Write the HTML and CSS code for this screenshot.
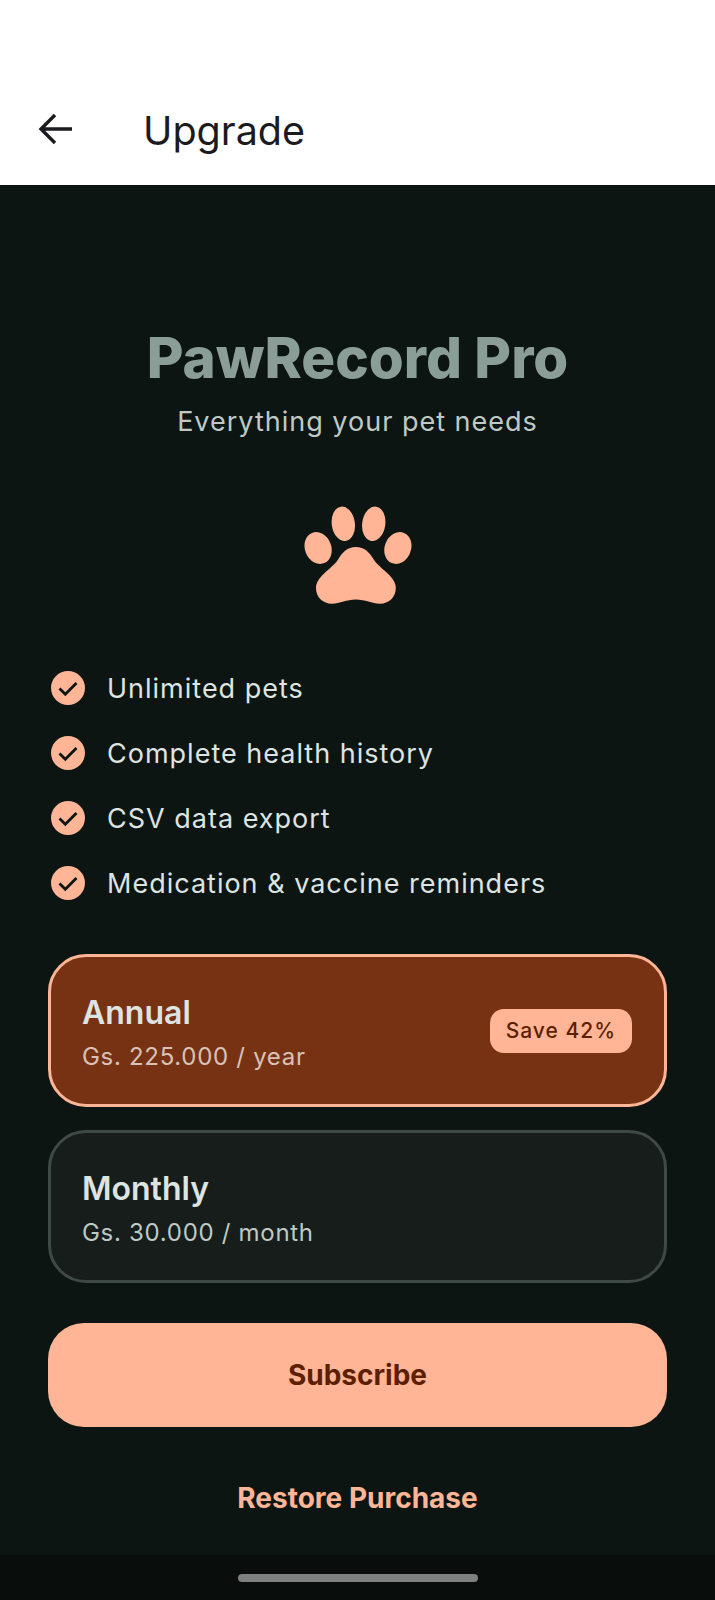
FILE: index.html
```html
<!DOCTYPE html>
<html lang="en">
<head>
  <meta charset="UTF-8">
  <meta name="viewport" content="width=device-width, initial-scale=1.0">
  <title>PawRecord - Upgrade</title>
  <link rel="stylesheet" href="styles.css">
</head>
<body>
  <div class="header">
    <button class="back-btn" aria-label="Back">
      <svg width="48" height="48" viewBox="0 0 24 24" fill="none" stroke="currentColor" stroke-width="1.7">
        <path d="M20 12H4.5M11.5 5l-7 7 7 7"/>
      </svg>
    </button>
    <h1 class="title">Upgrade</h1>
  </div>

  <div class="content">
    <h2 class="brand">PawRecord Pro</h2>
    <p class="tagline">Everything your pet needs</p>

    <svg class="paw" width="116" height="105" viewBox="0 0 110 100" fill="#FFB596">
      <ellipse cx="17" cy="40" rx="12.5" ry="15.5" transform="rotate(-22 17 40)"/>
      <ellipse cx="41" cy="17" rx="11" ry="16.5" transform="rotate(-8 41 17)"/>
      <ellipse cx="70" cy="17" rx="11" ry="16.5" transform="rotate(8 70 17)"/>
      <ellipse cx="93" cy="40" rx="12.5" ry="15.5" transform="rotate(22 93 40)"/>
      <path d="M53 39c8 0 13 5 17 12 3 5 9 9 14 14 4 4 7 8 7 13 0 9-7 15-15 15-8 0-14-4-23-4s-15 4-23 4c-8 0-15-6-15-15 0-5 3-9 7-13 5-5 11-9 14-14 4-7 9-12 17-12z"/>
    </svg>

    <ul class="features">
      <li class="feature">
        <svg class="check" width="34" height="34" viewBox="0 0 34 34"><circle cx="17" cy="17" r="17" fill="#FFB596"/><path d="M8.5 17.5l5.8 5.8L25.5 12" fill="none" stroke="#0D1513" stroke-width="2.8"/></svg>
        Unlimited pets
      </li>
      <li class="feature">
        <svg class="check" width="34" height="34" viewBox="0 0 34 34"><circle cx="17" cy="17" r="17" fill="#FFB596"/><path d="M8.5 17.5l5.8 5.8L25.5 12" fill="none" stroke="#0D1513" stroke-width="2.8"/></svg>
        Complete health history
      </li>
      <li class="feature">
        <svg class="check" width="34" height="34" viewBox="0 0 34 34"><circle cx="17" cy="17" r="17" fill="#FFB596"/><path d="M8.5 17.5l5.8 5.8L25.5 12" fill="none" stroke="#0D1513" stroke-width="2.8"/></svg>
        CSV data export
      </li>
      <li class="feature">
        <svg class="check" width="34" height="34" viewBox="0 0 34 34"><circle cx="17" cy="17" r="17" fill="#FFB596"/><path d="M8.5 17.5l5.8 5.8L25.5 12" fill="none" stroke="#0D1513" stroke-width="2.8"/></svg>
        Medication &amp; vaccine reminders
      </li>
    </ul>

    <div class="plan plan-selected">
      <div>
        <div class="plan-name">Annual</div>
        <div class="plan-price">Gs. 225.000 / year</div>
      </div>
      <span class="badge">Save 42%</span>
    </div>
    <div class="plan">
      <div>
        <div class="plan-name">Monthly</div>
        <div class="plan-price">Gs. 30.000 / month</div>
      </div>
    </div>

    <button class="subscribe-btn">Subscribe</button>
    <button class="restore-btn">Restore Purchase</button>
  </div>

  <div class="nav-bar"><div class="nav-pill"></div></div>
</body>
</html>
```

FILE: styles.css
```css
:root {
  --primary-color: #FFB596;
  --on-primary: #5C1F00;
  --background-color: #0D1513;
  --text-primary: #DDE4E1;
  --text-secondary: #BFC9C5;
}

* {
  box-sizing: border-box;
  margin: 0;
  padding: 0;
}

body {
  width: 715px;
  height: 1600px;
  display: flex;
  flex-direction: column;
  font-family: Inter, "Liberation Sans", sans-serif;
  background-color: var(--background-color);
  color: var(--text-primary);
  overflow: hidden;
}

button {
  font-family: inherit;
  border: none;
  background: none;
  cursor: pointer;
}

.header {
  height: 185px;
  flex-shrink: 0;
  padding: 0 0 20px 32px;
  display: flex;
  align-items: flex-end;
  background-color: #FFFFFF;
  color: #1B1B1F;
}

.back-btn {
  width: 48px;
  height: 72px;
  color: inherit;
  display: flex;
  align-items: center;
  justify-content: center;
}

.title {
  margin-left: 63px;
  font-size: 39.5px;
  line-height: 68px;
  font-weight: 400;
}

.content {
  flex: 1;
  padding: 0 48px;
  display: flex;
  flex-direction: column;
  align-items: center;
}

.brand {
  margin-top: 143px;
  font-size: 56.5px;
  line-height: 60px;
  font-weight: 800;
  color: #8A9E97;
}

.tagline {
  margin-top: 16px;
  font-size: 27px;
  line-height: 36px;
  letter-spacing: 1px;
  color: var(--text-secondary);
}

.paw {
  margin-top: 66px;
}

.features {
  list-style: none;
  width: 100%;
  margin-top: 57px;
  display: flex;
  flex-direction: column;
  gap: 25px;
}

.feature {
  height: 40px;
  display: flex;
  align-items: center;
  gap: 22px;
  padding-left: 3px;
  font-size: 27px;
  letter-spacing: 1px;
}

.plan {
  width: 100%;
  height: 153px;
  margin-top: 23px;
  padding: 0 32px 0 31px;
  display: flex;
  align-items: center;
  justify-content: space-between;
  background-color: #161D1B;
  border: 3px solid #3F4946;
  border-radius: 38px;
}

.plan-selected {
  margin-top: 51px;
  background-color: #773214;
  border-color: var(--primary-color);
}

.plan-name {
  margin-top: 5px;
  font-size: 32px;
  line-height: 40px;
  font-weight: 600;
}

.plan-price {
  margin-top: 8px;
  font-size: 24px;
  line-height: 32px;
  letter-spacing: 0.7px;
  color: var(--text-secondary);
}

.plan-selected .plan-price {
  color: #D8C2B8;
}

.badge {
  padding: 8px 16px;
  font-size: 21px;
  line-height: 28px;
  font-weight: 500;
  letter-spacing: 1px;
  color: var(--on-primary);
  background-color: var(--primary-color);
  border-radius: 14px;
}

.subscribe-btn {
  width: 100%;
  height: 104px;
  margin-top: 40px;
  font-size: 28px;
  font-weight: 700;
  color: var(--on-primary);
  background-color: var(--primary-color);
  border-radius: 36px;
}

.restore-btn {
  margin-top: 53px;
  font-size: 28px;
  line-height: 36px;
  font-weight: 700;
  color: var(--primary-color);
}

.nav-bar {
  height: 45px;
  flex-shrink: 0;
  display: flex;
  justify-content: center;
  padding-top: 19px;
  background-color: #090E0D;
}

.nav-pill {
  width: 240px;
  height: 8px;
  border-radius: 4px;
  background-color: #7E7F7F;
}
```
